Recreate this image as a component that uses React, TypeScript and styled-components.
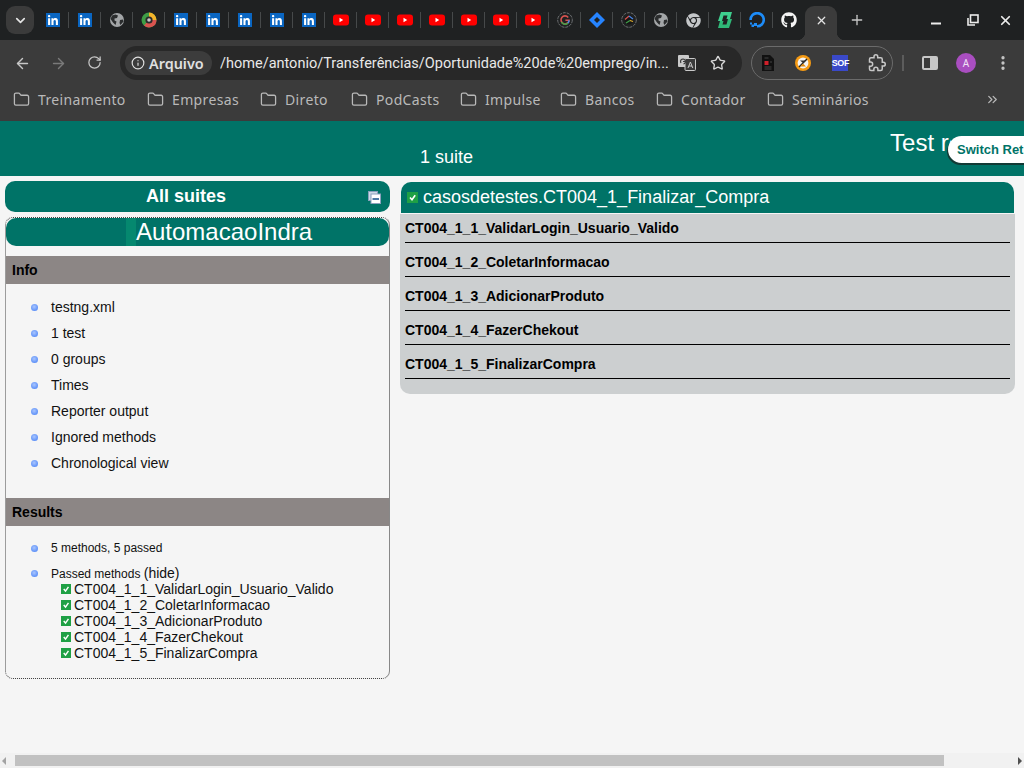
import React from "react";
import styled, { createGlobalStyle } from "styled-components";
import { FaGithub, FaChrome } from "react-icons/fa";
import { ChevronDown, X, Plus, ArrowLeft, ArrowRight, RotateCw, Info as InfoIcon, Star, Folder, ChevronsRight, EllipsisVertical } from "lucide-react";

const Global = createGlobalStyle`
  html, body { margin: 0; padding: 0; height: 100%; overflow: hidden; background: #f5f5f5; }
  * { box-sizing: border-box; }
`;

const Frame = styled.div`
  width: 1024px; height: 768px; display: flex; flex-direction: column; overflow: hidden;
  font-family: "Liberation Sans", Arial, sans-serif;
`;
const TabStrip = styled.div`
  height: 40px; background: #1f2122; display: flex; align-items: flex-start; flex: none; position: relative;
`;
const TabSearch = styled.div`
  width: 28px; height: 28px; margin: 6px 3px 0 6px; border-radius: 9px; background: #3b3b3b; color: #e4e4e4;
  display: flex; align-items: center; justify-content: center; flex: none;
`;
const TabItem = styled.div<{ $sep: boolean }>`
  width: 32px; height: 40px; flex: none; display: flex; align-items: center; justify-content: center; position: relative;
  &::after {
    content: ""; display: ${(p) => (p.$sep ? "block" : "none")}; position: absolute; right: 0; top: 12px; width: 1px; height: 16px; background: #46494a;
  }
`;
const ActiveTab = styled.div`
  width: 32px; height: 40px; margin-top: 6px; flex: none; background: #3b3b3b; border-radius: 9px 9px 0 0; color: #e4e4e4;
  display: flex; align-items: center; justify-content: center; padding-bottom: 12px; position: relative;
  &::before, &::after { content: ""; position: absolute; bottom: 6px; width: 8px; height: 8px; }
  &::before { left: -8px; background: radial-gradient(circle at 0 0, transparent 8px, #3b3b3b 8.5px); }
  &::after { right: -8px; background: radial-gradient(circle at 100% 0, transparent 8px, #3b3b3b 8.5px); }
`;
const NewTab = styled.div`
  width: 20px; height: 40px; margin-left: 10px; color: #c8c8c8; display: flex; align-items: center; justify-content: center;
`;
const WindowControls = styled.div`
  margin-left: auto; width: 106px; height: 40px; display: flex; align-items: center; color: #ececec; flex: none;
`;
const WinButton = styled.div`
  width: 37px; display: flex; justify-content: center;
  &:last-child { margin-left: -4px; }
`;
const Toolbar = styled.div`
  height: 44px; flex: none; background: #3b3b3b; display: flex; align-items: center; padding: 2px 0 0 0; position: relative; z-index: 1;
`;
const NavButton = styled.div<{ $dim?: boolean }>`
  width: 36px; display: flex; justify-content: center; color: ${(p) => (p.$dim ? "#7a7a7a" : "#c7c7c7")};
`;
const NavGroup = styled.div`
  display: flex; padding-left: 4px; width: 120px; flex: none;
`;
const Omnibox = styled.div`
  width: 622px; height: 34px; flex: none; background: #282828; border-radius: 17px; display: flex; align-items: center; padding-left: 5px; color: #e6e6e6;
`;
const Chip = styled.div`
  width: 87px; height: 24px; border-radius: 12px; background: #3c3c3c; display: flex; align-items: center; gap: 4px; padding-left: 6px; flex: none; color: #e0e0e0;
  font: 600 14.4px "Noto Sans", sans-serif;
`;
const UrlText = styled.div`
  margin-left: 8px; width: 448px; flex: none; font: 400 14.5px Roboto, sans-serif; white-space: nowrap; overflow: hidden; color: #e8e8e8;
`;
const OmniIcons = styled.div`
  display: flex; align-items: center; margin-left: 10px; gap: 14px; color: #d8d8d8;
`;
const ExtPill = styled.div`
  width: 142px; height: 34px; margin-left: 9px; flex: none; border: 1px solid #6b6b6b; border-radius: 17px; display: flex; align-items: center; padding: 0 6px 0 9px; justify-content: space-between; color: #c7c7c7;
`;
const SofBadge = styled.div`
  width: 16px; height: 16px; background: #3a49c9; color: #fff; font: 700 9px/16px "Liberation Sans", sans-serif; text-align: center; letter-spacing: -0.3px; flex: none;
`;
const SepLine = styled.div`
  width: 2px; height: 16px; background: #5c5c5c; margin: 0 18px 0 9px; flex: none;
`;
const SideIcon = styled.div`
  width: 16px; height: 14px; border: 2px solid #c7c7c7; border-radius: 2px; flex: none;
  background: linear-gradient(90deg, transparent 50%, #c7c7c7 50%);
`;
const Avatar = styled.div`
  width: 20px; height: 20px; border-radius: 50%; background: #a94ec0; color: #f0e0f5; margin-left: 18px; flex: none;
  display: flex; align-items: center; justify-content: center; font: 400 10px "Noto Sans", sans-serif;
`;
const MenuDots = styled.div`
  margin-left: 18px; color: #c7c7c7; display: flex;
`;
const BookmarkBar = styled.div`
  height: 37px; flex: none; background: #3b3b3b; display: flex; align-items: center; padding: 0 0 6px 13px; color: #b9b9b9; position: relative;
`;
const Bookmark = styled.div<{ $w: number }>`
  width: ${(p) => p.$w}px; flex: none; display: flex; align-items: center; gap: 8px;
  font: 400 14px "Noto Sans", sans-serif; letter-spacing: 0.35px; white-space: nowrap; color: #b9b9b9;
`;
const BookmarkMore = styled.div`
  margin-left: auto; margin-right: 24px; display: flex;
`;
const Page = styled.div`
  flex: 1; min-height: 0; background: #f5f5f5; display: flex; flex-direction: column; overflow: hidden; color: #111;
`;
const TopBanner = styled.div`
  height: 55px; flex: none; background: #007367; color: #fff; display: flex; position: relative; overflow: hidden;
`;
const SuiteCount = styled.div`
  margin-left: 420px; align-self: flex-end; padding-bottom: 8px; font-size: 18px; line-height: 21px; flex: none;
`;
const BannerTitle = styled.div`
  margin-left: 417px; padding-top: 8px; width: 61px; overflow: hidden; font-size: 24px; line-height: 28px; white-space: nowrap; flex: none;
`;
const SwitchButton = styled.div`
  position: absolute; left: 948px; top: 15px; width: 120px; height: 27px; background: #fff; border-radius: 14px; color: #007367;
  font-weight: 700; font-size: 13px; line-height: 27px; padding-left: 9px; white-space: nowrap; box-shadow: -1px 2px 0 #123a35;
`;
const Columns = styled.div`
  display: flex; padding: 5px 9px 0 5px; gap: 10px; flex: 1; min-height: 0;
`;
const LeftColumn = styled.div`
  width: 385px; flex: none; display: flex; flex-direction: column; gap: 5px;
`;
const AllSuites = styled.div`
  height: 31px; background: #007367; color: #fff; border-radius: 10px; font-weight: 700; font-size: 18px; line-height: 31px; text-align: center; position: relative; padding-right: 23px; flex: none;
`;
const CollapseIcon = styled.svg`
  position: absolute; right: 9px; top: 10px;
`;
const SuitePanel = styled.div`
  height: 462px; border: 1px dotted #444; border-right: 1px solid #888; border-radius: 8px; display: flex; flex-direction: column; flex: none;
`;
const SuiteName = styled.div`
  height: 28px; background: #007367; color: #fff; border-radius: 10px; font-size: 24px; line-height: 28px; padding-left: 120px; display: flex; flex: none;
`;
const NameMark = styled.span`
  display: block; width: 10px; height: 28px; background: #05886f; flex: none;
`;
const SectionBar = styled.div<{ $top: number }>`
  height: 28px; margin-top: ${(p) => p.$top}px; background: #8c8685; color: #000; font-weight: 700; font-size: 14px; line-height: 28px; padding-left: 6px; flex: none;
`;
const InfoList = styled.ul`
  list-style: none; margin: 10px 0 0 0; padding: 0;
`;
const Bullet = styled.li`
  position: relative; padding-left: 45px; font-size: 14px; height: 26px; line-height: 26px; color: #111;
  &::before {
    content: ""; position: absolute; left: 25px; top: 10px; width: 7px; height: 7px; border-radius: 50%;
    background: radial-gradient(circle at 45% 40%, #a9c6ff, #3f7bf5);
  }
`;
const ResultList = styled.ul`
  list-style: none; margin: 14px 0 0 0; padding: 0;
`;
const ResultItem = styled.li`
  position: relative; padding-left: 45px; font-size: 12px; line-height: 16px; margin-bottom: 9px; color: #111;
  &::before {
    content: ""; position: absolute; left: 25px; top: 5px; width: 7px; height: 7px; border-radius: 50%;
    background: radial-gradient(circle at 45% 40%, #a9c6ff, #3f7bf5);
  }
`;
const HideLink = styled.span`
  font-size: 14px;
`;
const MethodList = styled.div`
  margin: -1px 0 0 10px;
`;
const MethodRow = styled.div`
  display: flex; align-items: center; gap: 3px; font-size: 14px; line-height: 16px; color: #111; white-space: nowrap;
`;
const RightColumn = styled.div`
  width: 615px; flex: none; padding-top: 1px;
`;
const ClassHeader = styled.div`
  height: 31px; margin: 0 1px; background: #007367; color: #fff; border-radius: 10px 10px 0 0; display: flex; align-items: center; gap: 5px; padding-left: 6px; font-size: 18px; white-space: nowrap;
`;
const ClassBody = styled.div`
  background: #cccfd0; border-radius: 0 0 10px 10px; padding: 0 5px 10px; margin-top: 1px;
`;
const ClassRow = styled.div`
  height: 29px; margin-bottom: 5px; border-bottom: 1px solid #000; font-weight: 700; font-size: 14px; line-height: 28px; color: #000; white-space: nowrap;
`;
const ScrollTrack = styled.div`
  height: 15px; flex: none; background: #f1f1f1; display: flex; align-items: center; padding: 0 2px; position: relative;
`;
const ScrollThumb = styled.div`
  position: absolute; left: 15px; top: 2px; width: 929px; height: 11px; background: #c1c1c1;
`;
const ArrowLeftMark = styled.div`
  width: 0; height: 0; border: 4px solid transparent; border-left: 0; border-right: 4px solid #a3a3a3;
`;
const ArrowRightMark = styled.div`
  margin-left: auto; width: 0; height: 0; border: 4px solid transparent; border-right: 0; border-left: 4px solid #505050;
`;

const LinkedIn = () => (
  <svg width="14" height="14" viewBox="0 0 24 24">
    <rect width="24" height="24" fill="#0a66c2" />
    <path fill="#fff" d="M20.447 20.452h-3.554v-5.569c0-1.328-.027-3.037-1.852-3.037-1.853 0-2.136 1.445-2.136 2.939v5.667H9.351V9h3.414v1.561h.046c.477-.9 1.637-1.85 3.37-1.85 3.601 0 4.267 2.37 4.267 5.455v6.286zM5.337 7.433c-1.144 0-2.063-.926-2.063-2.065 0-1.138.92-2.063 2.063-2.063 1.14 0 2.064.925 2.064 2.063 0 1.139-.925 2.065-2.064 2.065zm1.782 13.019H3.555V9h3.564v11.452z" />
  </svg>
);
const YouTube = () => (
  <svg width="16" height="16" viewBox="0 0 16 16">
    <rect x="0" y="2.5" width="16" height="11" rx="3" fill="#f00" />
    <path d="M6.5 5.8 10.2 8 6.5 10.2z" fill="#fff" />
  </svg>
);
const Globe = () => (
  <svg width="16" height="16" viewBox="0 0 16 16">
    <circle cx="8" cy="8" r="7" fill="#a3a6a8" />
    <path d="M3 3.5 6.5 2.5 9 3.5 8 6 5.5 6.5 5.5 8.5 7.5 9.5 6.5 13 4 10.5 1.6 7zM11 8l3-.5.5 2-3 3.5-1-2z" fill="#2b2d2e" />
  </svg>
);
const RingColor = () => (
  <svg width="16" height="16" viewBox="0 0 16 16">
    <circle cx="8" cy="8" r="7.5" fill="#3f9d46" />
    <path d="M8 .5A7.5 7.5 0 0 1 15.5 8H8z" fill="#f3b32a" />
    <path d="M15.5 8A7.5 7.5 0 0 1 3 13.6L8 8z" fill="#d9534f" />
    <circle cx="8" cy="8" r="3.6" fill="#2a2a2a" />
    <circle cx="8" cy="8" r="1.8" fill="#c9c9c9" />
  </svg>
);
const RingGoogle = () => (
  <svg width="16" height="16" viewBox="0 0 16 16" fill="none">
    <circle cx="8" cy="8" r="7.3" stroke="#6d7072" strokeWidth="1" strokeDasharray="3 1" />
    <path d="M11.2 5.5A4 4 0 1 0 12 8.2H8.4" stroke="#d9534f" strokeWidth="1.6" />
    <path d="M4.5 10a4 4 0 0 0 6.5 1" stroke="#3fa14a" strokeWidth="1.6" />
    <path d="M12 8.2a4 4 0 0 1-1 2.8" stroke="#4a86e8" strokeWidth="1.6" />
  </svg>
);
const RingDark = () => (
  <svg width="16" height="16" viewBox="0 0 16 16" fill="none">
    <circle cx="8" cy="8" r="7.3" stroke="#6d7072" strokeWidth="1" strokeDasharray="3 1" />
    <circle cx="8" cy="8" r="4.4" fill="#161616" />
    <path d="M4 7.5 8 4" stroke="#d9534f" strokeWidth="1.3" />
    <path d="M8 4 12 7" stroke="#4a86e8" strokeWidth="1.3" />
    <path d="M5 11 9 8.5" stroke="#3fa14a" strokeWidth="1.3" />
    <path d="M9 8.5 12 9.5" stroke="#e3b12d" strokeWidth="1.3" />
  </svg>
);
const Jira = () => (
  <svg width="16" height="16" viewBox="0 0 16 16">
    <path d="M8 0 16 8 8 16 0 8z" fill="#2684ff" />
    <path d="M8 5 11 8 8 11 5 8z" fill="#1f2122" />
  </svg>
);
const GreenMark = () => (
  <svg width="16" height="16" viewBox="0 0 16 16" fill="#3ecf8e">
    <path d="M4 0h11l-2 7H9.5l1-3.5H6.5L5 9H1z" />
    <path d="M12 16H1l2-7h3.5l-1 3.5h4L11 7h4z" fill="#2fb877" />
  </svg>
);
const DigitalOcean = () => (
  <svg width="16" height="16" viewBox="0 0 16 16" fill="none">
    <path d="M8 14.3A6.6 6.6 0 1 0 1.6 8" stroke="#1d8cf8" strokeWidth="2.6" />
    <rect x="5" y="11" width="3" height="3" fill="#1d8cf8" />
    <rect x="2.5" y="12.5" width="2.5" height="2.5" fill="#1d8cf8" />
    <rect x="1" y="10.5" width="2" height="2" fill="#1d8cf8" />
  </svg>
);
const Translate = () => (
  <svg width="18" height="16" viewBox="0 0 18 16">
    <rect x="0" y="0" width="11" height="12" rx="1" fill="#c9c9c9" />
    <rect x="7" y="3.5" width="10.5" height="12" rx="1" fill="#3b3b3b" stroke="#c9c9c9" />
    <path d="M3 8a2.5 2.5 0 1 1 2.5 1M5 6.5h2" stroke="#3b3b3b" fill="none" strokeWidth="1.2" />
    <path d="M10 13l2.4-6 2.4 6M11 11h3" stroke="#c9c9c9" fill="none" />
  </svg>
);
const ExtDoc = () => (
  <svg width="14" height="16" viewBox="0 0 14 16">
    <path d="M1 0h8l4 4v12H1z" fill="#111" />
    <rect x="3.5" y="6" width="4" height="4" fill="#d0202a" />
    <path d="M3.5 3h4M3.5 12h7M3.5 14h7M9 7h2" stroke="#444" />
  </svg>
);
const ExtOrange = () => (
  <svg width="16" height="16" viewBox="0 0 16 16">
    <circle cx="8" cy="8" r="8" fill="#f59a14" />
    <circle cx="8" cy="8" r="5.4" fill="#f4f4f4" />
    <path d="M4 12 12 4" stroke="#222" strokeWidth="1.4" />
    <path d="M5 5.5h6L8 8z" fill="#333" />
    <path d="M5 11.5h6L8 8.5z" fill="#e08a10" />
  </svg>
);
const ExtensionIcon = () => (
  <svg width="18" height="18" viewBox="0 0 24 24" fill="none" stroke="currentColor" strokeWidth="2">
    <path d="M20.5 11H19V7c0-1.1-.9-2-2-2h-4V3.5C13 2.12 11.88 1 10.5 1S8 2.12 8 3.5V5H4c-1.1 0-1.99.9-1.99 2v3.8H3.5c1.49 0 2.7 1.21 2.7 2.7s-1.21 2.7-2.7 2.7H2V20c0 1.1.9 2 2 2h3.8v-1.5c0-1.49 1.21-2.7 2.7-2.7 1.49 0 2.7 1.21 2.7 2.7V22H17c1.1 0 2-.9 2-2v-4h1.5c1.38 0 2.5-1.12 2.5-2.5S21.88 11 20.5 11z" />
  </svg>
);
const MinimizeIcon = () => (
  <svg width="12" height="12" viewBox="0 0 12 12">
    <rect x="1" y="8.5" width="10" height="2" fill="currentColor" />
  </svg>
);
const RestoreIcon = () => (
  <svg width="12" height="12" viewBox="0 0 12 12" fill="none" stroke="currentColor" strokeWidth="1.6">
    <rect x="3.5" y="1" width="7.5" height="7.5" />
    <path d="M1 4v7h7" />
  </svg>
);
const PassCheck = ({ size }: { size: number }) => (
  <svg width={size} height={size} viewBox="0 0 11 11" style={{ flex: "none" }}>
    <rect width="11" height="11" fill="#1fa045" />
    <path d="M3 5.5 5 7.8 8.2 3.2" fill="none" stroke="#fff" strokeWidth="1.6" />
  </svg>
);

const tabs: React.ReactNode[] = [
  <LinkedIn />, <LinkedIn />, <Globe />, <RingColor />,
  <LinkedIn />, <LinkedIn />, <LinkedIn />, <LinkedIn />, <LinkedIn />,
  <YouTube />, <YouTube />, <YouTube />, <YouTube />, <YouTube />, <YouTube />, <YouTube />,
  <RingGoogle />, <Jira />, <RingDark />, <Globe />, <FaChrome size={15} color="#c4c7c9" />,
  <GreenMark />, <DigitalOcean />, <FaGithub size={16} color="#f4f4f4" />,
];
const bookmarks: [string, number][] = [["Treinamento", 134], ["Empresas", 113], ["Direto", 91], ["PodCasts", 109], ["Impulse", 100], ["Bancos", 96], ["Contador", 111], ["Seminários", 110]];
const infoItems = ["testng.xml", "1 test", "0 groups", "Times", "Reporter output", "Ignored methods", "Chronological view"];
const methods = ["CT004_1_1_ValidarLogin_Usuario_Valido", "CT004_1_2_ColetarInformacao", "CT004_1_3_AdicionarProduto", "CT004_1_4_FazerChekout", "CT004_1_5_FinalizarCompra"];

export default function App() {
  return (
    <Frame>
      <Global />
      <TabStrip>
        <TabSearch><ChevronDown size={15} strokeWidth={2.6} /></TabSearch>
        {tabs.map((t, i) => (
          <TabItem key={i} $sep={i < tabs.length - 1}>{t}</TabItem>
        ))}
        <ActiveTab><X size={13} strokeWidth={2.4} /></ActiveTab>
        <NewTab><Plus size={16} strokeWidth={2} /></NewTab>
        <WindowControls>
          <WinButton><MinimizeIcon /></WinButton>
          <WinButton><RestoreIcon /></WinButton>
          <WinButton><X size={15} strokeWidth={2.8} /></WinButton>
        </WindowControls>
      </TabStrip>
      <Toolbar>
        <NavGroup>
          <NavButton><ArrowLeft size={17} strokeWidth={2} /></NavButton>
          <NavButton $dim><ArrowRight size={17} strokeWidth={2} /></NavButton>
          <NavButton><RotateCw size={15} strokeWidth={2} /></NavButton>
        </NavGroup>
        <Omnibox>
          <Chip><InfoIcon size={14} strokeWidth={2} />Arquivo</Chip>
          <UrlText>/home/antonio/Transferências/Oportunidade%20de%20emprego/in...</UrlText>
          <OmniIcons>
            <Translate />
            <Star size={16} strokeWidth={2} />
          </OmniIcons>
        </Omnibox>
        <ExtPill>
          <ExtDoc />
          <ExtOrange />
          <SofBadge>SOF</SofBadge>
          <ExtensionIcon />
        </ExtPill>
        <SepLine />
        <SideIcon />
        <Avatar>A</Avatar>
        <MenuDots><EllipsisVertical size={18} strokeWidth={2.4} /></MenuDots>
      </Toolbar>
      <BookmarkBar>
        {bookmarks.map(([b, w]) => (
          <Bookmark key={b} $w={w}><Folder size={17} strokeWidth={1.8} />{b}</Bookmark>
        ))}
        <BookmarkMore><ChevronsRight size={15} strokeWidth={2} /></BookmarkMore>
      </BookmarkBar>
      <Page>
        <TopBanner>
          <SuiteCount>1 suite</SuiteCount>
          <BannerTitle>Test results</BannerTitle>
          <SwitchButton>Switch Retro Theme</SwitchButton>
        </TopBanner>
        <Columns>
          <LeftColumn>
            <AllSuites>
              All suites
              <CollapseIcon width="13" height="13" viewBox="0 0 13 13">
                <rect x="0.5" y="0.5" width="9" height="9" fill="#cfd8e6" stroke="#8aa0bc" />
                <rect x="3" y="3" width="9.5" height="9.5" fill="#fff" stroke="#8aa0bc" />
                <path d="M4.5 8h6.5" stroke="#003f7f" strokeWidth="1.4" />
              </CollapseIcon>
            </AllSuites>
            <SuitePanel>
              <SuiteName><NameMark />AutomacaoIndra</SuiteName>
              <SectionBar $top={10}>Info</SectionBar>
              <InfoList>
                {infoItems.map((i) => <Bullet key={i}>{i}</Bullet>)}
              </InfoList>
              <SectionBar $top={22}>Results</SectionBar>
              <ResultList>
                <ResultItem>5 methods, 5 passed</ResultItem>
                <ResultItem>
                  Passed methods <HideLink>(hide)</HideLink>
                  <MethodList>
                    {methods.map((m) => (
                      <MethodRow key={m}><PassCheck size={10} />{m}</MethodRow>
                    ))}
                  </MethodList>
                </ResultItem>
              </ResultList>
            </SuitePanel>
          </LeftColumn>
          <RightColumn>
            <ClassHeader><PassCheck size={11} />casosdetestes.CT004_1_Finalizar_Compra</ClassHeader>
            <ClassBody>
              {methods.map((m) => <ClassRow key={m}>{m}</ClassRow>)}
            </ClassBody>
          </RightColumn>
        </Columns>
        <ScrollTrack>
          <ArrowLeftMark />
          <ScrollThumb />
          <ArrowRightMark />
        </ScrollTrack>
      </Page>
    </Frame>
  );
}
